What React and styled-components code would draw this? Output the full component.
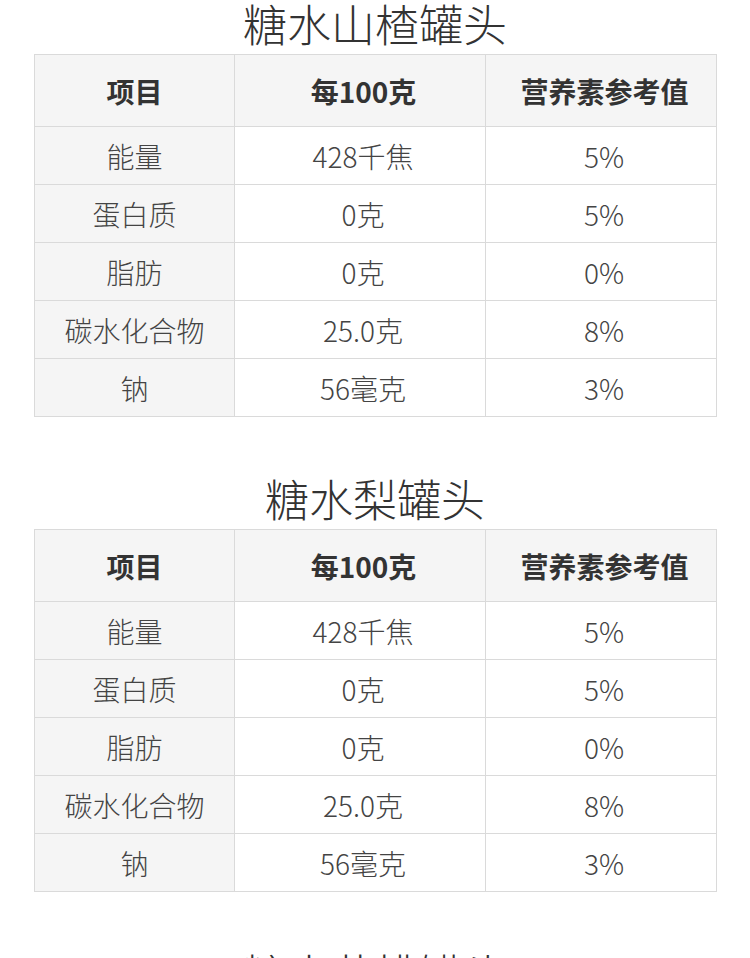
import React from 'react';
import styled, { createGlobalStyle } from 'styled-components';

const GlobalStyle = createGlobalStyle`
  html, body {
    margin: 0;
    padding: 0;
    background: #fff;
  }

  body {
    font-family: "Noto Sans CJK SC", "Noto Sans", sans-serif;
    color: #333;
  }
`;

const Page = styled.div`
  width: 750px;
  padding: 0 34px;
  box-sizing: border-box;
`;

const Section = styled.section`
  margin-bottom: 58px;
`;

const Title = styled.h2`
  margin: 0 0 8px;
  height: 46px;
  line-height: 46px;
  text-align: center;
  font-size: 44px;
  font-weight: 300;
  color: #333;
`;

const Table = styled.table`
  width: 682px;
  border-collapse: collapse;
  table-layout: fixed;
  border: 1px solid #dadada;
`;

const HeadCell = styled.th`
  height: 71px;
  padding: 0 0 0 ${(p) => (p.$label ? '0' : '7px')};
  background: #f5f5f5;
  border: 1px solid #dadada;
  font-size: 28px;
  font-weight: 700;
  color: #333;
  text-align: center;
  vertical-align: middle;
`;

const Cell = styled.td`
  height: 57px;
  padding: 0 0 0 ${(p) => (p.$label ? '0' : '6px')};
  border: 1px solid #dadada;
  background: ${(p) => (p.$label ? '#f5f5f5' : '#fff')};
  font-size: 28px;
  font-weight: 300;
  color: #444;
  text-align: center;
  vertical-align: middle;
`;

const rows = [
  ['能量', '428千焦', '5%'],
  ['蛋白质', '0克', '5%'],
  ['脂肪', '0克', '0%'],
  ['碳水化合物', '25.0克', '8%'],
  ['钠', '56毫克', '3%'],
];

const products = ['糖水山楂罐头', '糖水梨罐头', '糖水黄桃罐头'];

const NutritionTable = ({ name }) => (
  <Section>
    <Title>{name}</Title>
    <Table>
      <colgroup>
        <col style={{ width: 200 }} />
        <col style={{ width: 251 }} />
        <col style={{ width: 231 }} />
      </colgroup>
      <thead>
        <tr>
          <HeadCell $label>项目</HeadCell>
          <HeadCell>每100克</HeadCell>
          <HeadCell>营养素参考值</HeadCell>
        </tr>
      </thead>
      <tbody>
        {rows.map(([label, amount, nrv]) => (
          <tr key={label}>
            <Cell $label>{label}</Cell>
            <Cell>{amount}</Cell>
            <Cell>{nrv}</Cell>
          </tr>
        ))}
      </tbody>
    </Table>
  </Section>
);

const App = () => (
  <>
    <GlobalStyle />
    <Page>
      {products.map((name) => (
        <NutritionTable key={name} name={name} />
      ))}
    </Page>
  </>
);

export default App;
